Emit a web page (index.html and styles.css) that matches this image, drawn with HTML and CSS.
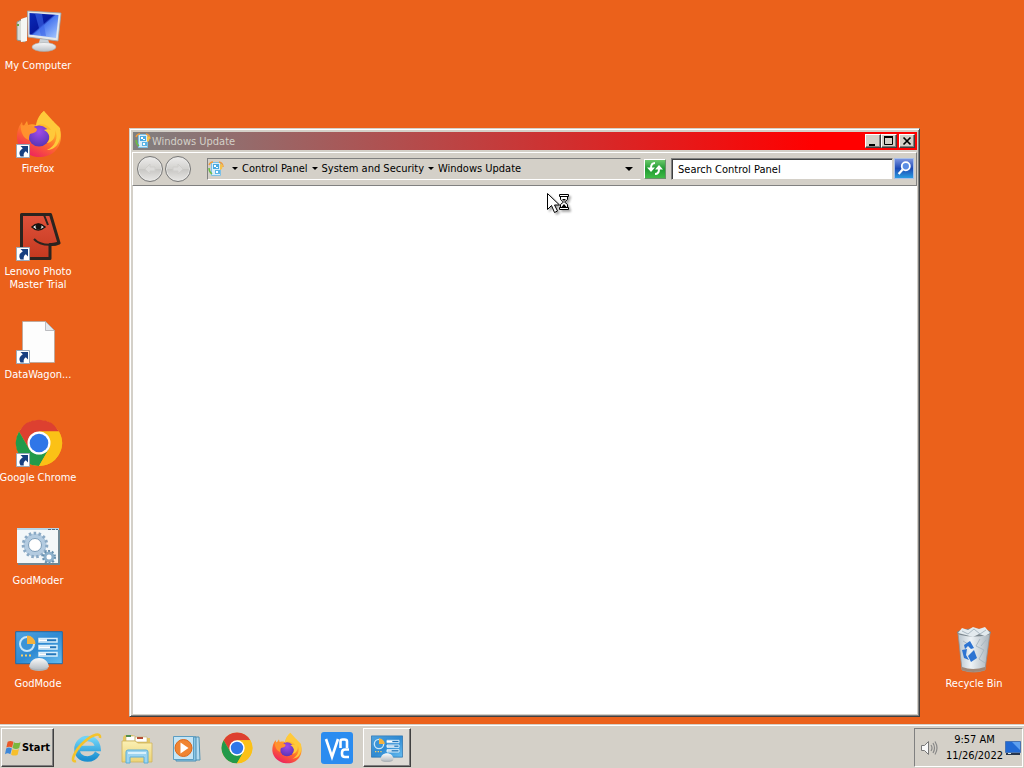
FILE: index.html
```
<!DOCTYPE html>
<html lang="en">
<head>
<meta charset="utf-8">
<title>Desktop</title>
<link rel="stylesheet" href="styles.css">
</head>
<body>
<svg class="defs" aria-hidden="true">
  <defs>
    <linearGradient id="scr" x1="0" y1="0" x2="1" y2="1"><stop offset="0" stop-color="#0a2bb8"/><stop offset=".45" stop-color="#0619a0"/><stop offset=".5" stop-color="#4a78f0"/><stop offset="1" stop-color="#a9cbff"/></linearGradient>
    <linearGradient id="grey" x1="0" y1="0" x2="0" y2="1"><stop offset="0" stop-color="#fafafa"/><stop offset="1" stop-color="#b9bfc4"/></linearGradient>
    <linearGradient id="ff" x1=".8" y1="0" x2=".3" y2="1"><stop offset="0" stop-color="#fff04a"/><stop offset=".35" stop-color="#ffb52a"/><stop offset=".62" stop-color="#ff6a2d"/><stop offset="1" stop-color="#ec1f62"/></linearGradient>
    <radialGradient id="ffp" cx=".5" cy=".3" r=".7"><stop offset="0" stop-color="#a04be8"/><stop offset="1" stop-color="#5a35b5"/></radialGradient>
    <linearGradient id="cp" x1="0" y1="0" x2="1" y2="1"><stop offset="0" stop-color="#4fa3e0"/><stop offset=".5" stop-color="#2f8ad2"/><stop offset="1" stop-color="#67bdf0"/></linearGradient>
    <linearGradient id="red" x1="0" y1="0" x2="0" y2="1"><stop offset="0" stop-color="#e0523b"/><stop offset="1" stop-color="#c4391f"/></linearGradient>
    <linearGradient id="ieb" x1="0" y1="0" x2="0" y2="1"><stop offset="0" stop-color="#6fd3f7"/><stop offset="1" stop-color="#1c8fd0"/></linearGradient>
    <linearGradient id="fold" x1="0" y1="0" x2="0" y2="1"><stop offset="0" stop-color="#fbf0b4"/><stop offset="1" stop-color="#ecd377"/></linearGradient>
    <linearGradient id="bin" x1="0" y1="0" x2="1" y2="0"><stop offset="0" stop-color="#b6c2cb"/><stop offset=".4" stop-color="#eef3f6"/><stop offset="1" stop-color="#a8b2ba"/></linearGradient>
    <symbol id="i-shortcut" viewBox="0 0 14 14"><path fill="#fff" stroke="#9ab" d="M.5.5h13v13H.5z"/><path fill="#173f80" d="M4.500 2H12v7.500L9.800 7.300Q7 9 7.800 12.500H4.500Q1.300 8 6.800 4.300z"/></symbol>
    <symbol id="i-chrome" viewBox="0 0 48 48"><circle cx="24" cy="24" r="23" fill="#fbc116"/><path fill="#dd4030" d="M4 12.500A23 23 0 0 1 44 12.500H24L14 29.800z"/><path fill="#229a4a" d="M4 12.500A23 23 0 0 0 24 47L34 29.800 24 35.500 14 29.800z"/><path fill="#fbc116" d="M24 12.500h20A23 23 0 0 1 24 47L34 29.800z"/><circle cx="24" cy="24" r="11.500" fill="#fff"/><circle cx="24" cy="24" r="9.300" fill="#2f76e8"/></symbol>
    <symbol id="i-firefox" viewBox="0 0 48 48"><path fill="url(#ff)" d="M29 1c1 5 5 8 8 11l1-1 3 6 2-1c3 5 4 11 2 17-3 9-11 14-20 14C13 47 3 39 2 28c0-6 1-11 5-16l1 5 4-6 1 4c3-1 5-1 8 0C22 9 25 4 29 1z"/><circle cx="24" cy="26" r="10.500" fill="url(#ffp)"/><path fill="#ff922e" d="M6 15l8 1c3 0 6 1 8 3 0 3-3 4-7 5-1 2-1 4-1 6-5-1-9-8-8-15z"/><path fill="#ffc93a" d="M21 16c5-3 12-2 15 4-3-1-5-1-7 0 6 3 7 9 3 13 6-1 9-6 8-13 4 7 0 17-8 20 10 0 15-10 13-22L38 11 29 1c-4 4-7 9-8 15z"/></symbol>
    <symbol id="i-cpanel" viewBox="0 0 48 40"><path fill="url(#cp)" stroke="#1f6aa8" d="M.7.700h46.600v32H.7z"/><circle cx="12" cy="13" r="7" fill="#3b93d6" stroke="#c9e6f8" stroke-width="2"/><path fill="#f5b23c" d="M12 13V4.500a8.500 8.500 0 0 1 8.500 8.500z"/><g fill="#2376ba" stroke="#d9effc" stroke-width="1.500"><path d="M24 7.500h18v3.500H24zM24 14.500h18V18H24zM24 21.500h18V25H24z"/></g><path stroke="#fff" stroke-width="2" d="M24 9.300h8M24 16.300h11M24 23.300h7"/><path stroke="#f5d06a" stroke-width="2" stroke-dasharray="2 2" d="M6 24.500h12"/><ellipse cx="24" cy="37" rx="9" ry="3" fill="#aeb4b8"/><path fill="url(#grey)" d="M14 36c1-6 5-9 10-9s9 3 10 9c-5 3-15 3-20 0z"/></symbol>
    <symbol id="i-update" viewBox="0 0 16 16"><path fill="#d8edf9" stroke="#7cc0e6" d="M3.500 1.500h9v13h-9z"/><path fill="#4aaae2" d="M5 3h6v5H5z"/><path fill="#5ab4e6" d="M7 9h5v4H7z"/><path fill="#fff" d="M6 4h2v2H6zM8 6h2v1H8zM8 10h2v2H8z"/><path fill="none" stroke="#ef9b3f" stroke-width="1.500" d="M1 4q1-3 4-3M11 1q4 1 4 5"/><path fill="none" stroke="#6bbd45" stroke-width="1.500" d="M1 7q0 4 3 6"/><path fill="#f5c24c" d="M12 3l3 1-1 4-2 1z"/></symbol>
  </defs>
</svg>

<div class="screen">
  <main class="desktop">
    <div class="icon-column">
      <a class="shortcut" href="#"><span class="pic">
        <svg viewBox="0 0 48 48"><path fill="#d9dcd7" stroke="#8d938e" d="M2 15l8-4v24l-8-2z"/><path fill="#f5f6f3" d="M6 12l6-2v24l-6 1z"/><path stroke="#68a348" stroke-width="2" d="M3 17v2"/><path fill="#ccd2d6" d="M25 32h8l2 7H23z"/><ellipse cx="29" cy="40" rx="12" ry="4.500" fill="url(#grey)" stroke="#a4a9ad" stroke-width=".6"/><path fill="#e4e8ea" stroke="#9aa4ab" stroke-width=".8" d="M12.500 4L46 6l-3 28-30-4z"/><path fill="url(#scr)" d="M14.500 6L43.500 8 41 31l-26.500-3.500z"/><path fill="#3e68e8" opacity=".6" d="M20 6.500l7 .5 4 22-5-.6z"/></svg></span>
        <span class="name">My Computer</span></a>
      <a class="shortcut" href="#"><span class="pic"><svg viewBox="0 0 48 48"><use href="#i-firefox"/></svg><svg class="arrow"><use href="#i-shortcut"/></svg></span><span class="name">Firefox</span></a>
      <a class="shortcut" href="#"><span class="pic">
        <svg viewBox="0 0 48 48"><path fill="url(#red)" stroke="#2b241f" stroke-width="3" stroke-linejoin="round" d="M6.500 1.500h29L44 30q-5 2-9 1.500v14H6.500z"/><path fill="none" stroke="#2b241f" stroke-width="2" d="M43 31Q26 34 19 26M29 2l4 10"/><path fill="#fff" stroke="#17120f" stroke-width="1.500" d="M17 14q6-6 13 0-7 6-13 0z"/><circle cx="23.500" cy="13.500" r="3" fill="#17120f"/></svg><svg class="arrow"><use href="#i-shortcut"/></svg></span><span class="name">Lenovo Photo<br>Master Trial</span></a>
      <a class="shortcut" href="#"><span class="pic">
        <svg viewBox="0 0 48 48"><path fill="#fdfdfd" stroke="#aaa6a2" stroke-width=".7" d="M7.500 5.500h23l9 9v32h-32z"/><path fill="#e5e8ec" stroke="#a3a5a9" stroke-width=".7" d="M30.500 5.500v9h9z"/></svg><svg class="arrow"><use href="#i-shortcut"/></svg></span><span class="name">DataWagon...</span></a>
      <a class="shortcut" href="#"><span class="pic"><svg viewBox="0 0 48 48"><use href="#i-chrome"/></svg><svg class="arrow"><use href="#i-shortcut"/></svg></span><span class="name">Google Chrome</span></a>
      <a class="shortcut" href="#"><span class="pic">
        <svg viewBox="0 0 48 48"><path fill="#6f8792" d="M3 8h42v35H3z"/><path fill="#f3f7f9" d="M2 8h41v33H2z"/><path fill="#b8d6e8" d="M2 6h42v2H2z"/><path stroke="#506b80" stroke-width="1" stroke-dasharray="3 1" d="M33 7.500h10"/><circle cx="20" cy="23" r="9" fill="#f3f7f9" stroke="#b3cbe0" stroke-width="5"/><circle cx="20" cy="23" r="11.800" fill="none" stroke="#8aa9c4" stroke-width="3" stroke-dasharray="2.500 2.400"/><circle cx="20" cy="23" r="6.500" fill="#fff" stroke="#7b9cb8"/><circle cx="34" cy="35" r="4" fill="#fff" stroke="#8cb0cb" stroke-width="3"/><circle cx="34" cy="35" r="6" fill="none" stroke="#6790ae" stroke-width="2" stroke-dasharray="2 1.800"/></svg></span>
        <span class="name">GodModer</span></a>
      <a class="shortcut" href="#"><span class="pic"><svg viewBox="0 -6 48 48"><use href="#i-cpanel" width="48" height="40"/></svg></span><span class="name">GodMode</span></a>
    </div>

    <a class="shortcut recycle" href="#"><span class="pic">
      <svg viewBox="0 0 48 48"><path fill="url(#bin)" stroke="#8c969d" stroke-width=".8" d="M8 8l4 37q12 4 23 0l5-37z"/><path fill="#9e8778" d="M12 42q11 4 23 0v3q-12 4-23 0z"/><ellipse cx="24" cy="7.500" rx="17" ry="4" fill="#7c878e"/><path fill="#e3eaee" d="M8 8l4-5 6 2 5-3 6 2 6-2 5 6-5 3-6-2-6 3-7-2z"/><path fill="none" stroke="#aab8c2" d="M12 6l6 3 6-5 6 5 6-4M30 14l-4 7 8 4-5 9 6 4M13 16l5 3M36 15l-5 6"/><g fill="#2d74d2"><path d="M14 20l6-4 4 7-3 1-3-3-3 3z"/><path d="M12 25l5-1-1 6 3 5-5-2z"/><path d="M18 31l6-6 3 8-6 4z"/></g></svg></span>
      <span class="name">Recycle Bin</span></a>

    <section class="window">
      <header class="titlebar">
        <svg class="small-icon"><use href="#i-update"/></svg>
        <h1>Windows Update</h1>
        <div class="controls">
          <button aria-label="Minimize"><svg viewBox="0 0 14 12"><path fill="#000" d="M3 9h6v2H3z"/></svg></button>
          <button aria-label="Maximize"><svg viewBox="0 0 14 12"><path fill="none" stroke="#000" d="M2.500 1.500h8v8h-8z"/><path fill="#000" d="M2 1h9v2H2z"/></svg></button>
          <button class="close" aria-label="Close"><svg viewBox="0 0 14 12"><path stroke="#000" stroke-width="1.700" d="M3.500 2.500l7 7M10.500 2.500l-7 7"/></svg></button>
        </div>
      </header>
      <nav class="toolbar">
        <div class="travel">
          <button aria-label="Back"><svg viewBox="0 0 14 14"><path d="M7 2L2 7l5 5V9h5V5H7z"/></svg></button>
          <button aria-label="Forward"><svg viewBox="0 0 14 14"><path d="M7 2l5 5-5 5V9H2V5h5z"/></svg></button>
        </div>
        <div class="address">
          <svg class="small-icon"><use href="#i-update"/></svg>
          <svg class="caret" viewBox="0 0 6 3"><path d="M0 0h6L3 3z"/></svg>
          <a href="#">Control Panel</a>
          <svg class="caret" viewBox="0 0 6 3"><path d="M0 0h6L3 3z"/></svg>
          <a href="#">System and Security</a>
          <svg class="caret" viewBox="0 0 6 3"><path d="M0 0h6L3 3z"/></svg>
          <a href="#">Windows Update</a>
          <button class="history" aria-label="Previous locations"><svg viewBox="0 0 8 4"><path d="M0 0h8L4 4z"/></svg></button>
        </div>
        <button class="refresh" aria-label="Refresh"><svg viewBox="0 0 20 18"><path fill="none" stroke="#fff" stroke-width="2" d="M10 3Q6 3 6 8M10 14q4 0 4-5"/><path fill="#fff" d="M2 7.500h8L6 12zM10 9.500h8L14 5z"/></svg></button>
        <form class="search">
          <input type="text" aria-label="Search Control Panel" value="Search Control Panel">
          <button type="button" aria-label="Search"><svg viewBox="0 0 20 20"><circle cx="12" cy="7.500" r="4.500" fill="#5b8de4" stroke="#fff" stroke-width="2"/><path stroke="#fff" stroke-width="2.500" d="M8.500 11L4 16"/></svg></button>
        </form>
      </nav>
      <div class="content"></div>
    </section>

    <svg class="cursor" viewBox="0 0 26 22"><path fill="#fff" stroke="#000" d="M1.500 1.500v16l4-4 3 7 3-1.500-3-6h5z"/><path fill="#fff" stroke="#000" d="M13.500 2.500h9v2h-1v3l-3 2.500 3 2.500v3h1v2h-9v-2h1v-3l3-2.500-3-2.500v-3h-1zM14 4.500h8M14 15.500h8"/><path fill="#000" d="M16 7h4L18 9zM15.500 15l2.500-3 2.500 3z"/></svg>
  </main>

  <footer class="taskbar">
    <button class="start"><svg viewBox="0 0 18 18"><path fill="#e8582a" d="M3 2q3-2 6.500 0L8 8.500q-3-2-6.500 0z"/><path fill="#7ab83e" d="M10 2.500q3 2 7.500 0L16 9q-3.500 2-7.500 0z"/><path fill="#3d87d8" d="M1.300 9.500q3-2 6.500 0L6 16q-3-2-6 0z"/><path fill="#f6bf2c" d="M8.300 10q3.500 2 7.400 0l-1.500 6.500q-3.500 2-7.300 0z"/></svg>Start</button>
    <div class="launchers">
      <button aria-label="Internet Explorer"><svg viewBox="0 0 32 32"><path fill="none" stroke="url(#ieb)" stroke-width="5.500" d="M26.500 21Q23 27 16.500 27C9 27 6 22 6 17S10 6.500 16.500 6.500 26.500 11 27 16.500H9"/><path fill="none" stroke="#f4c32c" stroke-width="2.600" d="M5 29C-2 31 4 18 13 10 22 2 30 0 29 6"/></svg></button>
      <button aria-label="File Explorer"><svg viewBox="0 0 32 32"><path fill="#e4c766" d="M2 5l2-2h8l2 3h15v5H2z"/><path fill="#fff" stroke="#c6b26b" stroke-width=".6" d="M5 4h9v5H5zM14 5h12v5H14z"/><path stroke="#508e51" stroke-width="2" d="M5 4h5"/><path stroke="#b54d36" stroke-width="2" d="M16 6h6"/><path fill="url(#fold)" stroke="#cfb25c" stroke-width=".8" d="M1 9h13l3 2h14v19H1z"/><path fill="#9dd4f0" stroke="#5baed9" d="M5 31V20q0-2 2-2h18q2 0 2 2v11h-4v-6H9v6z"/><path fill="#d9f1fc" d="M7 20h18v2H7z"/></svg></button>
      <button aria-label="Media Player"><svg viewBox="0 0 32 32"><path fill="#b6dcf0" stroke="#5192b5" d="M8 5h20l1 23H10z"/><path fill="#8cc7e6" stroke="#4c8eb3" d="M5 5h20v24H5z"/><path fill="#c5e5f5" stroke="#5b9dc2" d="M2.500 4.500h20v23h-20z"/><circle cx="12.500" cy="16" r="8.500" fill="#f08432" stroke="#db681d"/><path fill="#fff" d="M9.500 10.500l8 5.500-8 5.500z"/></svg></button>
      <button aria-label="Google Chrome"><svg viewBox="0 0 48 48"><use href="#i-chrome"/></svg></button>
      <button aria-label="Firefox"><svg viewBox="0 0 48 48"><use href="#i-firefox"/></svg></button>
      <button aria-label="VNC Viewer"><svg viewBox="0 0 32 32"><rect width="32" height="32" rx="3" fill="#2b8cf0"/><path fill="none" stroke="#fff" stroke-width="2.600" d="M5 7l6 18 6-18M19.500 16V9.500q0-2 2-2h2q2.500 0 2.500 2V16M28 17.500h-4q-3 0-3 3V22q0 3 3 3h4"/></svg></button>
      <button class="active" aria-label="Windows Update"><svg viewBox="0 -5 48 48"><use href="#i-cpanel" width="48" height="40"/></svg></button>
    </div>
    <div class="tray">
      <svg class="speaker" viewBox="0 0 18 18"><path fill="#f8f8f8" stroke="#777" d="M1.500 6.500h3l4-4v13l-4-4h-3z"/><path fill="none" stroke="#888" stroke-width="1.200" d="M11 6q2 3 0 6M13 4q3 5 0 10M15 2.500q4 6.500 0 13"/></svg>
      <div class="clock"><time>9:57 AM</time><time>11/26/2022</time></div>
      <svg class="peek" viewBox="0 0 16 14"><path fill="#2169d4" stroke="#4a73b0" d="M.5.500h15v11H.5z"/><path fill="#5ea0f0" d="M15 1v8L7 1z"/><path fill="#26354d" d="M1 12h14v2H1z"/><path fill="#d8e8e8" d="M3 12h3v1H3z"/></svg>
    </div>
  </footer>
</div>
</body>
</html>
```

FILE: styles.css
```
* { box-sizing: border-box; }

body {
  margin: 0;
  font: 11px/13px "DejaVu Sans Condensed", "DejaVu Sans", sans-serif;
  font-stretch: condensed;
  color: #000;
}

a { color: inherit; text-decoration: none; }
button, input { font: inherit; color: inherit; margin: 0; padding: 0; border: 0; border-radius: 0; }
svg { display: block; flex: none; }
.defs { position: absolute; width: 0; height: 0; }

.screen {
  display: flex;
  flex-direction: column;
  height: 100vh;
  overflow: hidden;
  background: #eb611b;
}

.desktop { position: relative; flex: 1; min-height: 0; }

.icon-column {
  display: grid;
  grid-template-columns: 76px;
  grid-auto-rows: 103px;
  width: 76px;
  padding-top: 7px;
}

.shortcut {
  display: flex;
  flex-direction: column;
  align-items: center;
  gap: 4px;
  color: #fff;
  text-align: center;
}
.pic { width: 48px; height: 48px; position: relative; }
.icon-column .pic { margin-left: 2px; }
.pic > svg { width: 48px; height: 48px; }
.pic > .arrow { position: absolute; left: 1px; bottom: 0; width: 14px; height: 14px; }
.name { white-space: nowrap; }
.recycle { position: absolute; right: 12px; bottom: 34px; width: 76px; }

.window {
  position: absolute;
  inset: 128px 104px 7px 129px;
  display: flex;
  flex-direction: column;
  padding: 2px;
  background: #d4d0c8;
  border: 1px solid;
  border-color: #d4d0c8 #404040 #404040 #d4d0c8;
  box-shadow: inset 1px 1px #fff, inset -1px -1px #808080;
}

.titlebar {
  display: flex;
  align-items: center;
  gap: 1px;
  height: 18px;
  margin: 1px 0 2px 1px;
  padding: 0 2px;
  background: linear-gradient(90deg, #808080, #ff0000 87%);
  color: #d4d0c8;
}
.titlebar h1 { flex: 1; margin: 0; font-size: 11px; font-weight: normal; }
.small-icon { width: 16px; height: 16px; }
.controls { display: flex; }
.controls button, .start, .active {
  background: #d4d0c8;
  border: 1px solid;
  border-color: #fff #404040 #404040 #fff;
  box-shadow: inset -1px -1px #808080;
}
.controls button { width: 16px; height: 14px; }
.controls .close { margin-left: 2px; }
.controls svg { width: 14px; height: 12px; }

.toolbar {
  display: flex;
  align-items: center;
  height: 34px;
  padding: 0 2px 0 4px;
  background: #d4d0c8;
  border: 1px solid #808080;
  border-top-color: #fff;
  border-left-color: #fff;
}
.travel {
  display: flex;
  gap: 2px;
  margin-right: 16px;
}
.travel button {
  display: grid;
  place-items: center;
  width: 26px;
  height: 26px;
  border: 1px solid #777;
  border-radius: 50%;
  background: linear-gradient(#ecebea, #d2d1ce 50%, #c8c7c4 52%, #e8e7e5);
  box-shadow: inset 0 0 0 1px #e8e8e6;
}
.travel svg { width: 14px; height: 14px; fill: #dcdbd9; stroke: #cfcecb; }

.address {
  display: flex;
  flex: 1;
  align-items: center;
  gap: 4px;
  height: 22px;
  padding: 0 4px 1px 0;
  border: 1px solid;
  border-color: #808080 #d4d0c8 #fff #808080;
}
.address .small-icon { margin-right: 4px; }
.caret { width: 6px; height: 3px; }
.history {
  display: grid;
  place-items: center;
  width: 14px;
  height: 20px;
  margin-left: auto;
  background: none;
}
.history svg { width: 8px; height: 4px; }
.refresh {
  width: 22px;
  height: 20px;
  margin: 0 5px 0 3px;
  border: 1px solid;
  border-color: #fff #6b8f6b #6b8f6b #fff;
  background: linear-gradient(#6cc96c, #1f9a31 50%, #3fbb45);
}
.refresh svg { width: 20px; height: 18px; }
.search { display: flex; gap: 1px; width: 243px; }
.search input {
  flex: 1;
  min-width: 0;
  height: 22px;
  padding: 0 6px;
  background: #fff;
  border: 1px solid;
  border-color: #808080 #d4d0c8 #d4d0c8 #808080;
  box-shadow: inset 1px 1px #404040;
}
.search button {
  width: 20px;
  height: 21px;
  border: 1px solid #a9c0e8;
  background: linear-gradient(#7a93e0, #1c49b4 50%, #2a9be0);
}
.search svg { width: 18px; height: 19px; }

.content { flex: 1; margin: 0 0 0 1px; background: #fff; }

.cursor { position: absolute; left: 546px; top: 192px; width: 26px; height: 22px; filter: drop-shadow(2px 2px 1px #0005); }

.taskbar {
  display: flex;
  align-items: center;
  height: 44px;
  padding: 3px 1px 1px 1px;
  background: #d4d0c8;
  border-top: 1px solid #d4d0c8;
  box-shadow: inset 0 1px #fff;
}
.start {
  display: flex;
  align-items: center;
  justify-content: center;
  gap: 1px;
  width: 53px;
  height: 39px;
  font-weight: bold;
}
.start svg { width: 16px; height: 16px; }
.launchers { display: flex; flex: 1; gap: 2px; margin-left: 9px; }
.launchers button {
  display: grid;
  place-items: center;
  width: 48px;
  height: 39px;
  background: none;
}
.launchers .active {
  background: #dedbd5;
  border: 1px solid;
  border-color: #fff #404040 #404040 #fff;
}
.launchers svg { width: 32px; height: 32px; }
.tray {
  display: flex;
  align-items: center;
  gap: 2px;
  height: 39px;
  padding: 0 1px 0 5px;
  border: 1px solid;
  border-color: #808080 #fff #fff #808080;
}
.speaker { width: 18px; height: 18px; }
.clock {
  display: flex;
  flex-direction: column;
  align-items: center;
  gap: 3px;
  margin-left: 6px;
}
.peek { width: 16px; height: 14px; }
```
